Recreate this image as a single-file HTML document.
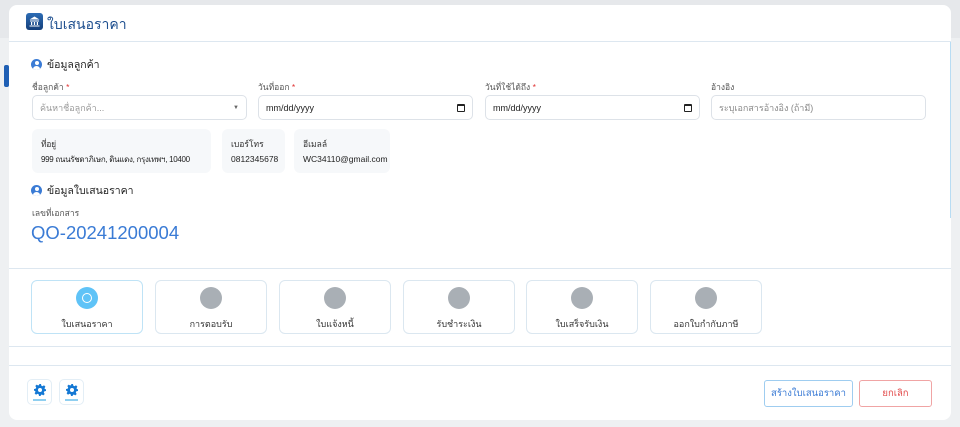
<!DOCTYPE html>
<html><head><meta charset="utf-8"><style>
*{box-sizing:border-box;margin:0;padding:0}
body{width:960px;height:427px;background:#e6e8eb;font-family:"Liberation Sans","Noto Sans CJK SC",sans-serif;position:relative;overflow:hidden;color:#333}
.a{position:absolute}
.modal{left:9px;top:5px;width:942px;height:415px;background:#fff;border-radius:8px;overflow:hidden}
.lbl{font-size:8.5px;color:#555}
.req{color:#e03131}
.inp{height:25px;border:1px solid #dde2e8;border-radius:5px;background:#fff;font-size:9px;padding:0 7px;display:flex;align-items:center;justify-content:space-between}
.info{background:#f6f8fa;border-radius:6px;height:44px;padding:8px 9px;font-size:8.5px;line-height:15px;white-space:nowrap}
.step{width:112px;height:54px;border:1px solid #dbe7f0;border-radius:6px;background:#fff;text-align:center;font-size:9px}
.step .c{width:22px;height:22px;border-radius:50%;background:#a9afb5;margin:6px auto 0}
.step .t{margin-top:8px}
.sec{font-size:10.5px;display:flex;align-items:center;gap:5px;color:#222}
.uic{width:11px;height:11px;border-radius:50%;background:#3a7bd5;position:relative;overflow:hidden}
.uic:before{content:"";position:absolute;left:3.5px;top:2px;width:4px;height:4px;border-radius:50%;background:#fff}
.uic:after{content:"";position:absolute;left:2px;top:7px;width:7px;height:6px;border-radius:50%;background:#fff}
.gear{width:25px;height:26px;border:1px solid #e3eef6;border-radius:5px;background:#fff;display:flex;flex-direction:column;align-items:center;justify-content:center}
.gear i{display:block;width:13px;height:2px;background:#8fcff0;margin-top:3px}
</style></head><body>
<div class="a" style="left:0;top:38px;width:960px;height:389px;background:#eef0f2"></div>
<div class="a" style="left:4px;top:65px;width:5px;height:22px;background:#1f5fb4;border-radius:2px"></div>
<div class="a modal">
 <div class="a" style="left:0;top:0;width:942px;height:37px;border-bottom:1px solid #dde7f0"></div>
 <div class="a" style="left:17px;top:8px;width:17px;height:17px;border-radius:3px;background:linear-gradient(#2d6cb5,#143f7a)">
  <svg width="17" height="17" viewBox="0 0 17 17"><path d="M3.5 6.5 L8.5 3.5 L13.5 6.5Z M4 7.5h9v1H4z M5 9h1.2v3H5z M7.9 9h1.2v3H7.9z M10.8 9H12v3h-1.2z M3.5 12.5h10v1h-10z" fill="#fff"/></svg>
 </div>
 <div class="a" style="left:38px;top:9px;font-size:14px;color:#1e4f8f">ใบเสนอราคา</div>
 <div class="a" style="left:941px;top:37px;width:2px;height:176px;background:#b8dcf3"></div>
 <div class="a sec" style="left:22px;top:51px"><span class="uic"></span>ข้อมูลลูกค้า</div>
 <div class="a lbl" style="left:23px;top:75px">ชื่อลูกค้า <span class="req">*</span></div>
 <div class="a lbl" style="left:249px;top:75px">วันที่ออก <span class="req">*</span></div>
 <div class="a lbl" style="left:476px;top:75px">วันที่ใช้ได้ถึง <span class="req">*</span></div>
 <div class="a lbl" style="left:702px;top:75px">อ้างอิง</div>
 <div class="a inp" style="left:23px;top:90px;width:215px;color:#999">ค้นหาชื่อลูกค้า...<span style="font-size:6px;color:#666">▼</span></div>
 <div class="a inp" style="left:249px;top:90px;width:215px;color:#222">mm/dd/yyyy<span style="width:8px;height:8px;border:1.5px solid #222;border-top-width:2.5px;border-radius:1px"></span></div>
 <div class="a inp" style="left:476px;top:90px;width:215px;color:#222">mm/dd/yyyy<span style="width:8px;height:8px;border:1.5px solid #222;border-top-width:2.5px;border-radius:1px"></span></div>
 <div class="a inp" style="left:702px;top:90px;width:215px;color:#888">ระบุเอกสารอ้างอิง (ถ้ามี)</div>
 <div class="a info" style="left:23px;top:124px;width:179px;letter-spacing:-0.3px">ที่อยู่<br><span style="color:#222;font-size:8px">999 ถนนรัชดาภิเษก, ดินแดง, กรุงเทพฯ, 10400</span></div>
 <div class="a info" style="left:213px;top:124px;width:63px">เบอร์โทร<br><span style="color:#222">0812345678</span></div>
 <div class="a info" style="left:285px;top:124px;width:96px">อีเมลล์<br><span style="color:#222">WC34110@gmail.com</span></div>
 <div class="a sec" style="left:22px;top:177px"><span class="uic"></span>ข้อมูลใบเสนอราคา</div>
 <div class="a lbl" style="left:23px;top:201px">เลขที่เอกสาร</div>
 <div class="a" style="left:22px;top:217px;font-size:18.5px;color:#3a7bd5">QO-20241200004</div>
 <div class="a" style="left:0;top:263px;width:942px;height:1px;background:#dde7f0"></div>
 <div class="a step" style="left:22px;top:275px;border-color:#bfe3f6"><div class="c" style="background:#5fc3f7;position:relative"><div style="position:absolute;left:6px;top:6px;width:10px;height:10px;border:1px solid #fff;border-radius:50%"></div></div><div class="t">ใบเสนอราคา</div></div>
 <div class="a step" style="left:146px;top:275px"><div class="c"></div><div class="t">การตอบรับ</div></div>
 <div class="a step" style="left:270px;top:275px"><div class="c"></div><div class="t">ใบแจ้งหนี้</div></div>
 <div class="a step" style="left:394px;top:275px"><div class="c"></div><div class="t">รับชำระเงิน</div></div>
 <div class="a step" style="left:517px;top:275px"><div class="c"></div><div class="t">ใบเสร็จรับเงิน</div></div>
 <div class="a step" style="left:641px;top:275px"><div class="c"></div><div class="t">ออกใบกำกับภาษี</div></div>
 <div class="a" style="left:0;top:341px;width:942px;height:1px;background:#dde7f0"></div>
 <div class="a" style="left:0;top:360px;width:942px;height:1px;background:#dde7f0"></div>
 <div class="a gear" style="left:18px;top:374px"><svg width="12" height="12" viewBox="0 0 12 12"><path d="M5 0h2l.3 1.6 1.3.6 1.4-.9 1.4 1.4-.9 1.4.6 1.3L12 5v2l-1.6.3-.6 1.3.9 1.4-1.4 1.4-1.4-.9-1.3.6L7 12H5l-.3-1.6-1.3-.6-1.4.9-1.4-1.4.9-1.4-.6-1.3L0 7V5l1.6-.3.6-1.3-.9-1.4 1.4-1.4 1.4.9 1.3-.6z M6 4a2 2 0 1 0 0 4 2 2 0 1 0 0-4z" fill="#1478d4" fill-rule="evenodd"/></svg><i></i></div>
 <div class="a gear" style="left:50px;top:374px"><svg width="12" height="12" viewBox="0 0 12 12"><path d="M5 0h2l.3 1.6 1.3.6 1.4-.9 1.4 1.4-.9 1.4.6 1.3L12 5v2l-1.6.3-.6 1.3.9 1.4-1.4 1.4-1.4-.9-1.3.6L7 12H5l-.3-1.6-1.3-.6-1.4.9-1.4-1.4.9-1.4-.6-1.3L0 7V5l1.6-.3.6-1.3-.9-1.4 1.4-1.4 1.4.9 1.3-.6z M6 4a2 2 0 1 0 0 4 2 2 0 1 0 0-4z" fill="#1478d4" fill-rule="evenodd"/></svg><i></i></div>
 <div class="a" style="left:755px;top:375px;width:89px;height:27px;border:1px solid #9fcdf0;border-radius:3px;font-size:9.5px;color:#3a7bd5;text-align:center;line-height:25px">สร้างใบเสนอราคา</div>
 <div class="a" style="left:850px;top:375px;width:73px;height:27px;border:1px solid #f0a4a4;border-radius:3px;font-size:9.5px;color:#e24b4b;text-align:center;line-height:25px">ยกเลิก</div>
</div>
</body></html>
